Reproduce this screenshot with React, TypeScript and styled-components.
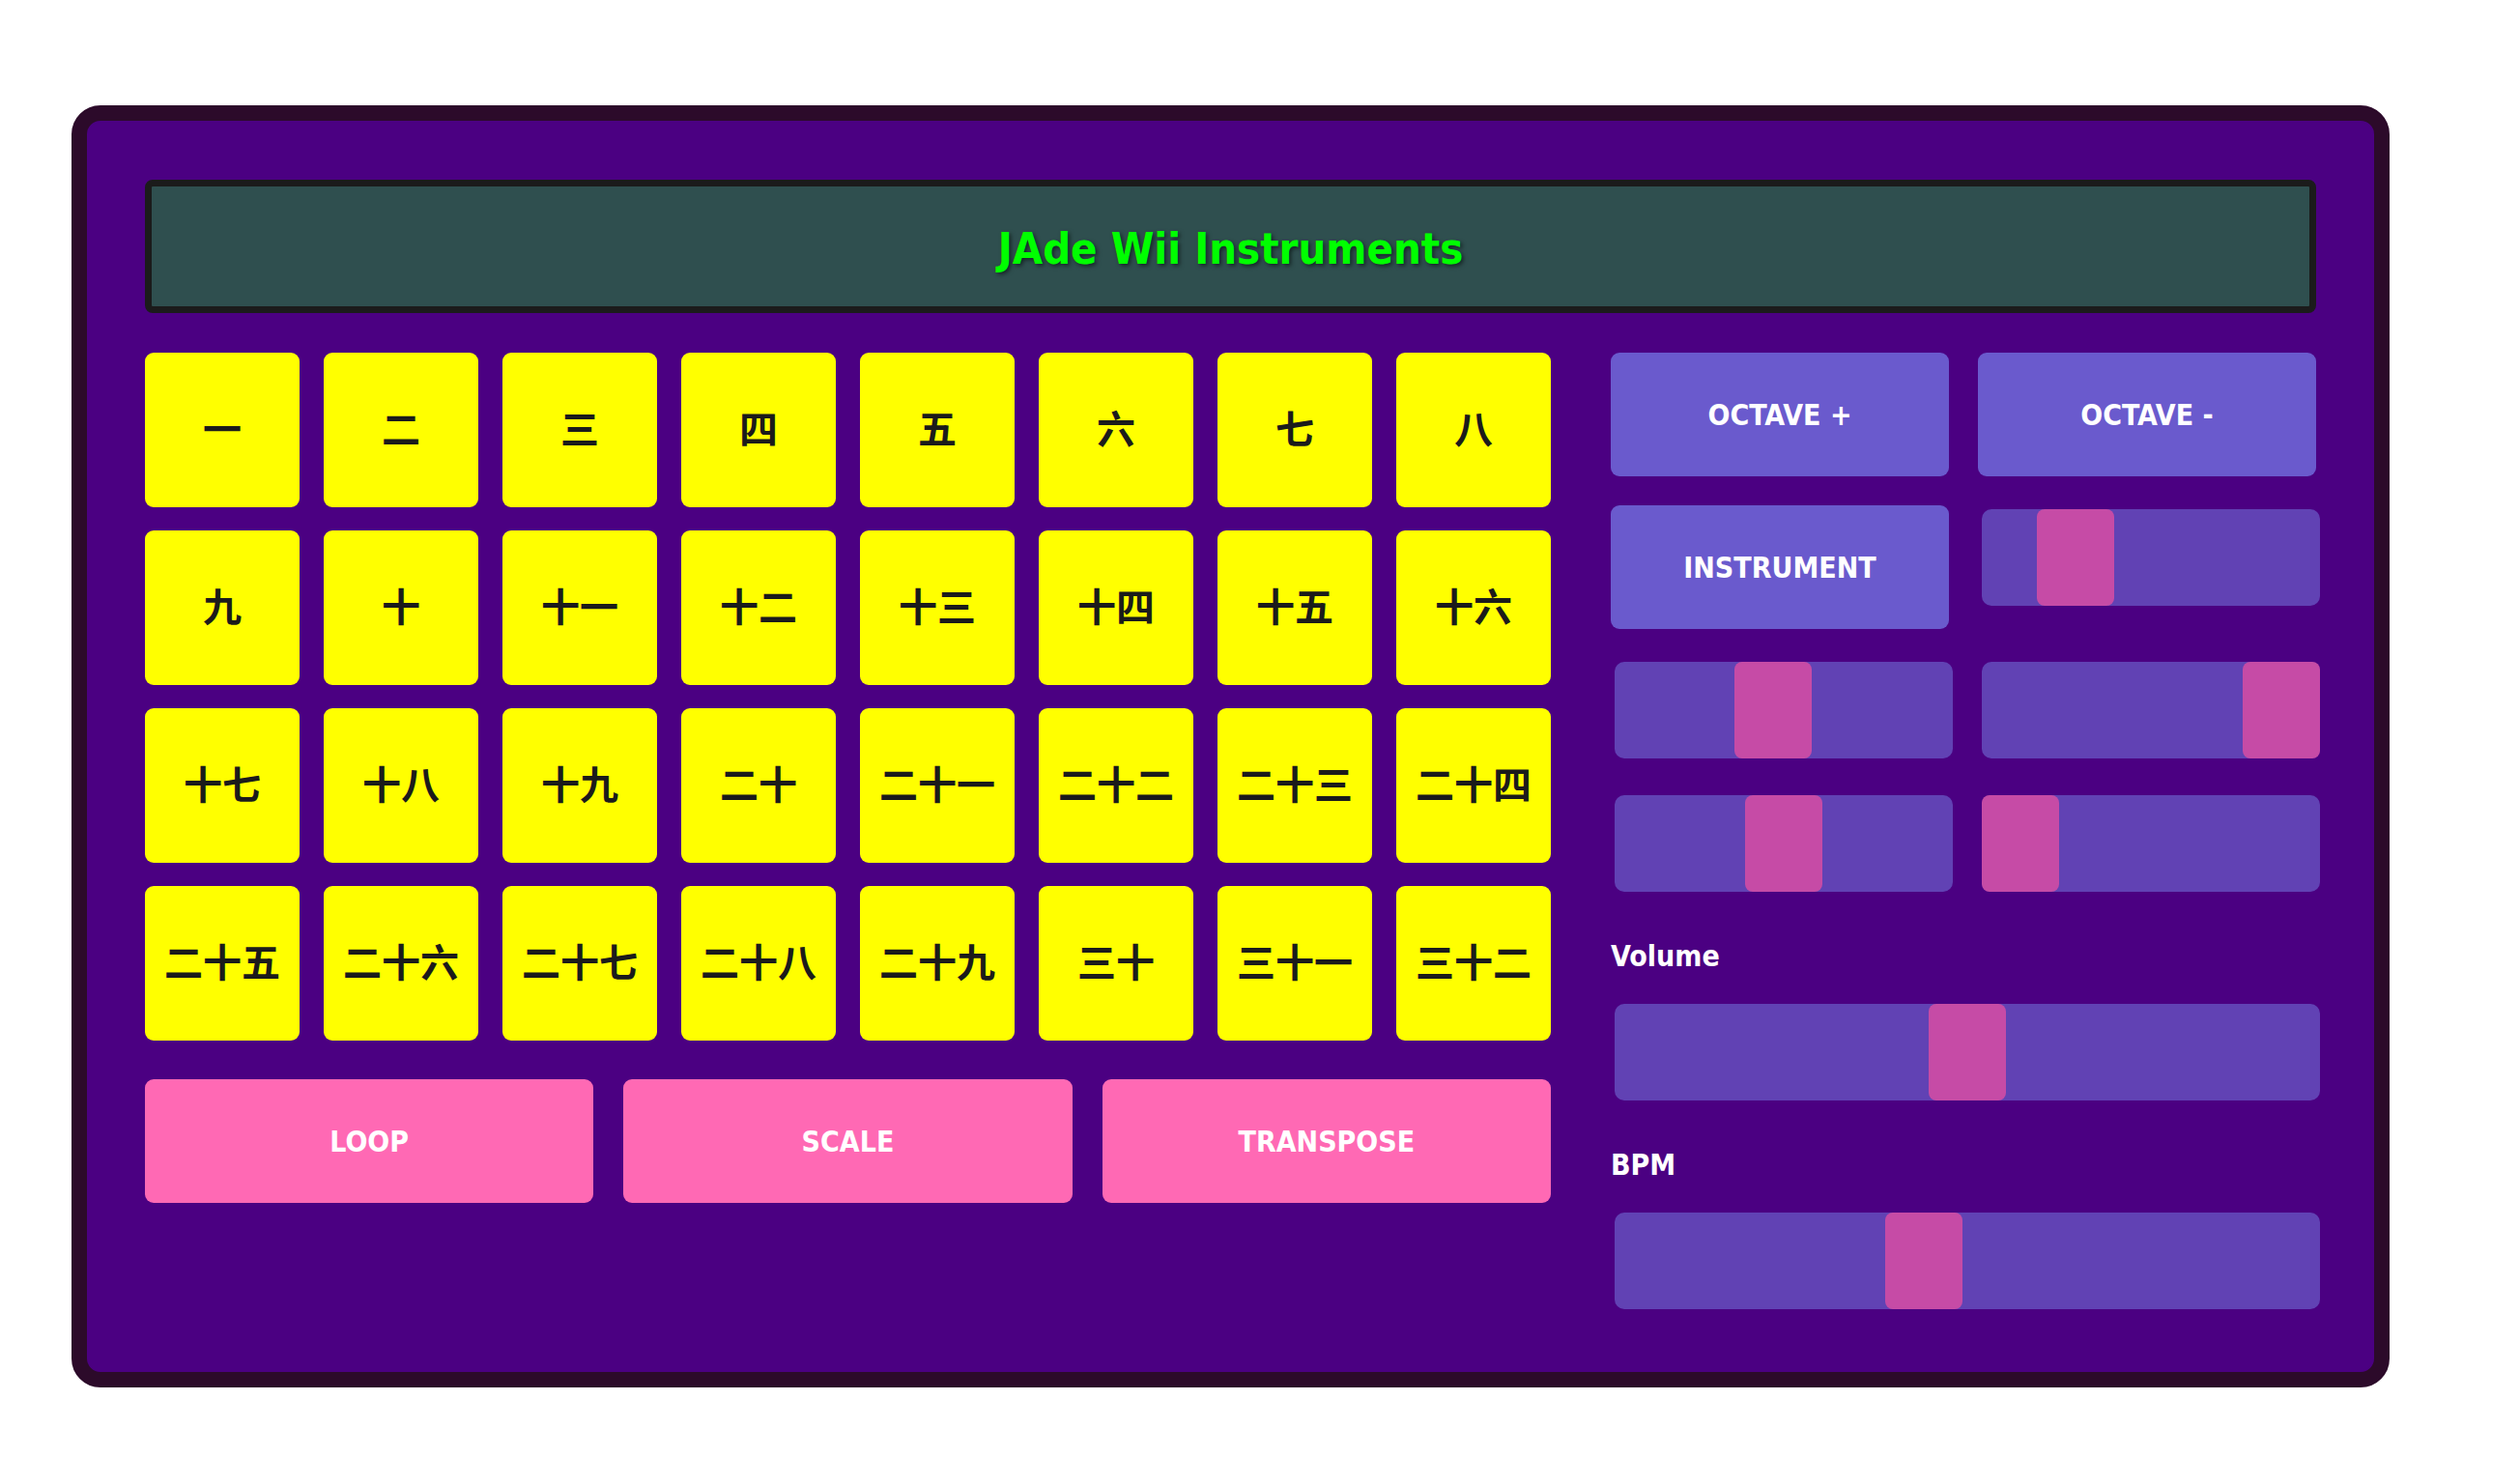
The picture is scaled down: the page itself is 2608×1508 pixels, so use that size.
import styled, { createGlobalStyle } from "styled-components"

const GlobalStyle = createGlobalStyle`
  html, body {
    margin: 0;
    padding: 0;
    background: #ffffff;
  }
  body {
    font-family: "Liberation Sans Narrow", "DejaVu Sans Condensed", "Liberation Sans", sans-serif;
  }
`

const Page = styled.div`
  padding: 109px 0 0 74px;
`

const Frame = styled.div`
  box-sizing: border-box;
  width: 2399px;
  height: 1327px;
  border: 16px solid #2c0a2a;
  border-radius: 30px;
  background: #4b0082;
  padding: 61px 60px 0 60px;
`

const Display = styled.div`
  box-sizing: border-box;
  height: 138px;
  border: 7px solid #1b1b1b;
  border-radius: 8px;
  background: #2f4f4f;
  display: flex;
  align-items: center;
  justify-content: center;
  padding-top: 5px;
`

const Title = styled.h1`
  margin: 0;
  font-size: 45px;
  font-weight: 700;
  color: #00ff00;
  text-shadow: 2px 2px 4px rgba(0, 0, 0, 0.55);
`

const Main = styled.div`
  display: grid;
  grid-template-columns: 1455px 730px;
  column-gap: 62px;
  margin-top: 41px;
  align-items: start;
`

const LeftColumn = styled.div`
  display: flex;
  flex-direction: column;
`

const Keys = styled.div`
  display: grid;
  grid-template-columns: repeat(8, 1fr);
  column-gap: 25px;
  row-gap: 24px;
`

const Key = styled.button`
  height: 160px;
  border: none;
  border-radius: 9px;
  background: #ffff00;
  color: #1b1b1b;
  font-family: "Noto Sans CJK SC", "Noto Sans CJK JP", sans-serif;
  font-size: 40px;
  font-weight: 700;
  padding: 0 0 6px;
  cursor: pointer;
`

const Actions = styled.div`
  display: grid;
  grid-template-columns: repeat(3, 1fr);
  column-gap: 31px;
  margin-top: 40px;
`

const PadButton = styled.button<{ $tone: "pink" | "slate" }>`
  height: 128px;
  border: none;
  border-radius: 9px;
  background: ${props => (props.$tone === "pink" ? "#ff69b4" : "#6a5acd")};
  color: #ffffff;
  font-family: inherit;
  font-size: 30px;
  font-weight: 700;
  padding: 0;
  cursor: pointer;
`

const RightColumn = styled.div`
  display: flex;
  flex-direction: column;
`

const Controls = styled.div`
  display: grid;
  grid-template-columns: repeat(2, 1fr);
  column-gap: 30px;
  row-gap: 30px;
`

const Range = styled.input.attrs({ type: "range", min: 0, max: 100 })`
  -webkit-appearance: none;
  appearance: none;
  display: block;
  box-sizing: border-box;
  width: 100%;
  height: 100px;
  margin: 4px 0 4px 4px;
  padding: 0;
  background: #6142b4;
  border-radius: 10px;
  outline: none;

  &::-webkit-slider-thumb {
    -webkit-appearance: none;
    appearance: none;
    width: 80px;
    height: 100px;
    border: none;
    border-radius: 8px;
    background: #c64ba6;
    cursor: pointer;
  }
`

const Label = styled.label`
  display: block;
  margin: 45px 0 27px;
  height: 36px;
  line-height: 36px;
  color: #ffffff;
  font-size: 30px;
  font-weight: 700;
`

const keys = [
  "一", "二", "三", "四", "五", "六", "七", "八",
  "九", "十", "十一", "十二", "十三", "十四", "十五", "十六",
  "十七", "十八", "十九", "二十", "二十一", "二十二", "二十三", "二十四",
  "二十五", "二十六", "二十七", "二十八", "二十九", "三十", "三十一", "三十二",
]

export default function App() {
  return (
    <>
      <GlobalStyle />
      <Page>
        <Frame>
          <Display>
            <Title>JAde Wii Instruments</Title>
          </Display>
          <Main>
            <LeftColumn>
              <Keys>
                {keys.map(k => (
                  <Key key={k}>{k}</Key>
                ))}
              </Keys>
              <Actions>
                <PadButton $tone="pink">LOOP</PadButton>
                <PadButton $tone="pink">SCALE</PadButton>
                <PadButton $tone="pink">TRANSPOSE</PadButton>
              </Actions>
            </LeftColumn>
            <RightColumn>
              <Controls>
                <PadButton $tone="slate">OCTAVE +</PadButton>
                <PadButton $tone="slate">OCTAVE -</PadButton>
                <PadButton $tone="slate">INSTRUMENT</PadButton>
                <Range aria-label="Attack" defaultValue={21} />
                <Range aria-label="Decay" defaultValue={46} />
                <Range aria-label="Sustain" defaultValue={100} />
                <Range aria-label="Release" defaultValue={50} />
                <Range aria-label="Detune" defaultValue={0} />
              </Controls>
              <Label htmlFor="volume">Volume</Label>
              <Range id="volume" defaultValue={50} />
              <Label htmlFor="bpm">BPM</Label>
              <Range id="bpm" defaultValue={43} />
            </RightColumn>
          </Main>
        </Frame>
      </Page>
    </>
  )
}
